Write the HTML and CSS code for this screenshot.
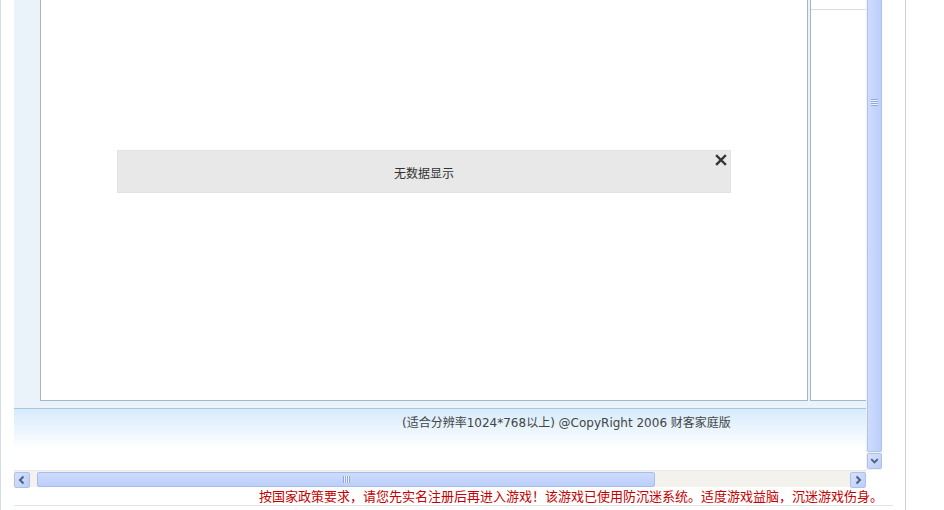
FILE: index.html
```html
<!DOCTYPE html>
<html>
<head>
	<meta charset="utf-8">
	<link rel="stylesheet" href="styles.css">
</head>
<body>
	<div class="page">
		<div class="frame">
			<div class="view">
				<div class="panels">
					<div class="main">
						<div class="notice">
							<span class="close">
								<svg width="12" height="12" viewBox="0 0 12 12"><path d="M2 2 L10 10 M10 2 L2 10" stroke="#333" stroke-width="2.4" stroke-linecap="square"/></svg>
							</span>
							<p>无数据显示</p>
						</div>
					</div>
					<div class="side">
						<div class="side-head"></div>
					</div>
				</div>
				<div class="footer">(适合分辨率1024*768以上) @CopyRight 2006 财客家庭版</div>
			</div>
			<div class="vscroll">
				<div class="vthumb"><i class="grip-h"></i></div>
				<div class="sbtn">
					<svg width="14" height="14" viewBox="0 0 14 14"><path d="M3.5 5 L7 8.5 L10.5 5" fill="none" stroke="#4d6185" stroke-width="2"/></svg>
				</div>
			</div>
			<div class="hscroll">
				<div class="sbtn">
					<svg width="14" height="14" viewBox="0 0 14 14"><path d="M8.5 3.5 L5 7 L8.5 10.5" fill="none" stroke="#4d6185" stroke-width="2"/></svg>
				</div>
				<div class="htrack">
					<div class="hthumb"><i class="grip-v"></i></div>
				</div>
				<div class="sbtn">
					<svg width="14" height="14" viewBox="0 0 14 14"><path d="M5.5 3.5 L9 7 L5.5 10.5" fill="none" stroke="#4d6185" stroke-width="2"/></svg>
				</div>
			</div>
			<div class="corner"></div>
		</div>
		<div class="warn">按国家政策要求，请您先实名注册后再进入游戏！该游戏已使用防沉迷系统。适度游戏益脑，沉迷游戏伤身。</div>
	</div>
</body>
</html>
```

FILE: styles.css
```css
html,body{
	margin: 0;
	padding: 0;
	background: #fff;
}
body{
	width: 944px;
	height: 510px;
	overflow: hidden;
	font-family: "Noto Sans CJK SC", sans-serif;
}
.page{
	width: 891px;
	height: 510px;
	padding-left: 13px;
	border-left: 1px solid #d3dde8;
	border-right: 1px solid #cfcfcf;
}
.frame{
	display: grid;
	grid-template-columns: 852px 16px;
	grid-template-rows: 470px 17px;
	width: 868px;
}
.view{
	overflow: hidden;
	background: #ebf3fa;
	display: flex;
	flex-direction: column;
}
.panels{
	display: flex;
	gap: 2px;
	height: 401px;
	padding-left: 26px;
	padding-bottom: 7px;
	flex: none;
}
.main{
	box-sizing: border-box;
	width: 768px;
	height: 401px;
	background: #fff;
	border: 1px solid #a3b5c6;
	border-top: none;
	padding-top: 150px;
	padding-left: 76px;
}
.notice{
	position: relative;
	box-sizing: border-box;
	width: 614px;
	height: 43px;
	background: #e8e8e8;
	border: 1px solid #e2e2e2;
	text-align: center;
}
.notice p{
	margin: 0;
	padding-top: 14px;
	font-size: 12px;
	line-height: 16px;
	color: #333;
}
.close{
	position: absolute;
	top: 3px;
	right: 3px;
	width: 12px;
	height: 12px;
	display: flex;
}
.side{
	flex: 1;
	background: #fff;
	border-left: 1px solid #a3b5c6;
	border-bottom: 1px solid #a3b5c6;
	box-sizing: border-box;
	height: 401px;
}
.side-head{
	height: 9px;
	border-bottom: 1px solid #dcdcdc;
}
.footer{
	flex: 1;
	border-top: 1px solid #a8c5da;
	background: linear-gradient(#d6ebfc, #fff 40px);
	padding: 6px 0 0 388px;
	font-family: "DejaVu Sans", "Noto Sans CJK SC", sans-serif;
	font-size: 12px;
	line-height: 17px;
	color: #444;
	white-space: nowrap;
}
.vscroll{
	display: flex;
	flex-direction: column;
	background: #f4f2ec;
	border-left: 1px solid #f2f2f2;
	box-sizing: border-box;
}
.vthumb{
	box-sizing: border-box;
	height: 452px;
	margin-bottom: 1px;
	background: linear-gradient(90deg, #cddbfd, #bccff9);
	border: 1px solid #aec2ee;
	border-top: none;
	border-radius: 0 0 2px 2px;
	display: flex;
	justify-content: center;
	padding-top: 99px;
}
.grip-h{
	display: block;
	width: 7px;
	height: 7px;
	background: repeating-linear-gradient(#8ea8df 0 1px, #eef3ff 1px 2px);
}
.sbtn{
	box-sizing: border-box;
	width: 16px;
	height: 16px;
	flex: none;
	background: linear-gradient(135deg, #d6e1fd, #bccdf6);
	border: 1px solid #aec1ec;
	border-radius: 2px;
	display: flex;
	align-items: center;
	justify-content: center;
}
.vscroll .sbtn{
	width: 15px;
}
.hscroll{
	grid-column: 1;
	display: flex;
	align-items: flex-start;
	background: #f4f2ec;
	border-top: 1px solid #e6e6e6;
	padding-top: 1px;
}
.htrack{
	flex: 1;
	padding-left: 7px;
}
.hthumb{
	box-sizing: border-box;
	width: 618px;
	height: 15px;
	background: linear-gradient(#cddbfd, #bccff9);
	border: 1px solid #a9bdec;
	border-radius: 2px;
	display: flex;
	justify-content: center;
	align-items: center;
}
.grip-v{
	display: block;
	width: 7px;
	height: 7px;
	background: repeating-linear-gradient(90deg, #8ea8df 0 1px, #eef3ff 1px 2px);
}
.corner{
	background: #fff;
}
.warn{
	width: 879px;
	height: 19px;
	box-sizing: border-box;
	border-bottom: 1px solid #e3e3e3;
	text-align: right;
	padding-right: 10px;
	font-size: 13px;
	line-height: 18px;
	color: #c40000;
	white-space: nowrap;
}
```
